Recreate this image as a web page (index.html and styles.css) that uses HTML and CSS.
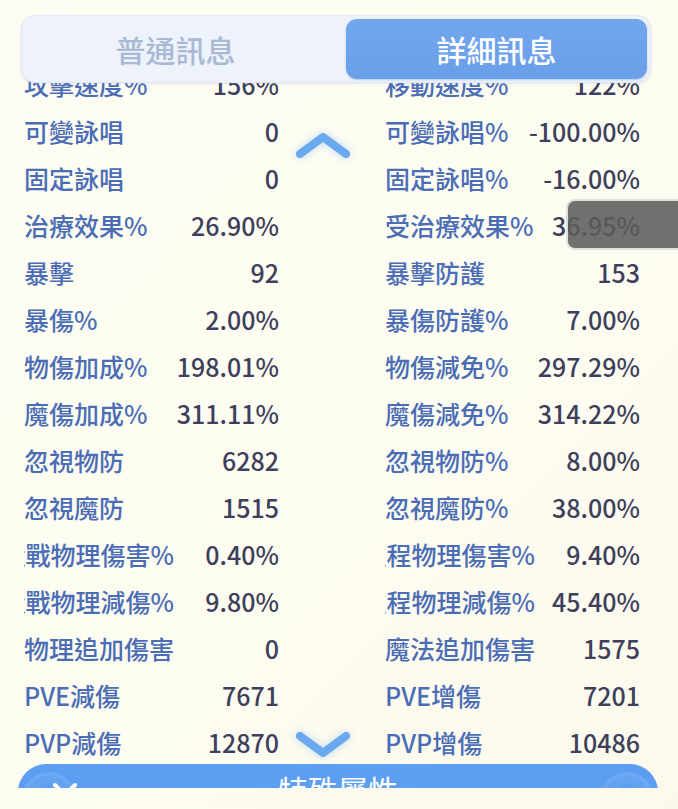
FILE: index.html
```html
<!DOCTYPE html>
<html lang="zh-Hant">
<head>
    <meta charset="UTF-8">
    <meta name="viewport" content="width=device-width, initial-scale=1.0">
    <title>詳細訊息</title>
    <link rel="stylesheet" href="styles.css">
</head>
<body>
    <div class="screen">
        <!-- Tab switcher sits on top of the scrolled list -->
        <div class="tabs">
            <div class="tab">普通訊息</div>
            <div class="tab active">詳細訊息</div>
        </div>

        <div class="stats">
            <div class="stat"><span class="label">攻擊速度%</span><span class="value">156%</span></div>
            <div class="stat"><span class="label">移動速度%</span><span class="value">122%</span></div>
            <div class="stat"><span class="label">可變詠唱</span><span class="value">0</span></div>
            <div class="stat"><span class="label">可變詠唱%</span><span class="value">-100.00%</span></div>
            <div class="stat"><span class="label">固定詠唱</span><span class="value">0</span></div>
            <div class="stat"><span class="label">固定詠唱%</span><span class="value">-16.00%</span></div>
            <div class="stat"><span class="label">治療效果%</span><span class="value">26.90%</span></div>
            <div class="stat"><span class="label">受治療效果%</span><span class="value">36.95%</span></div>
            <div class="stat"><span class="label">暴擊</span><span class="value">92</span></div>
            <div class="stat"><span class="label">暴擊防護</span><span class="value">153</span></div>
            <div class="stat"><span class="label">暴傷%</span><span class="value">2.00%</span></div>
            <div class="stat"><span class="label">暴傷防護%</span><span class="value">7.00%</span></div>
            <div class="stat"><span class="label">物傷加成%</span><span class="value">198.01%</span></div>
            <div class="stat"><span class="label">物傷減免%</span><span class="value">297.29%</span></div>
            <div class="stat"><span class="label">魔傷加成%</span><span class="value">311.11%</span></div>
            <div class="stat"><span class="label">魔傷減免%</span><span class="value">314.22%</span></div>
            <div class="stat"><span class="label">忽視物防</span><span class="value">6282</span></div>
            <div class="stat"><span class="label">忽視物防%</span><span class="value">8.00%</span></div>
            <div class="stat"><span class="label">忽視魔防</span><span class="value">1515</span></div>
            <div class="stat"><span class="label">忽視魔防%</span><span class="value">38.00%</span></div>
            <div class="stat"><span class="label clip"><span>近戰物理傷害%</span></span><span class="value">0.40%</span></div>
            <div class="stat"><span class="label clip"><span>遠程物理傷害%</span></span><span class="value">9.40%</span></div>
            <div class="stat"><span class="label clip"><span>近戰物理減傷%</span></span><span class="value">9.80%</span></div>
            <div class="stat"><span class="label clip"><span>遠程物理減傷%</span></span><span class="value">45.40%</span></div>
            <div class="stat"><span class="label">物理追加傷害</span><span class="value">0</span></div>
            <div class="stat"><span class="label">魔法追加傷害</span><span class="value">1575</span></div>
            <div class="stat"><span class="label">PVE減傷</span><span class="value">7671</span></div>
            <div class="stat"><span class="label">PVE增傷</span><span class="value">7201</span></div>
            <div class="stat"><span class="label">PVP減傷</span><span class="value">12870</span></div>
            <div class="stat"><span class="label">PVP增傷</span><span class="value">10486</span></div>
        </div>

        <!-- scroll hints -->
        <svg class="arrow arrow-up" width="54" height="30" viewBox="0 0 54 30">
            <polyline points="4,22 27,5 50,22" fill="none" stroke="#6aa9f0" stroke-width="8" stroke-linecap="round" stroke-linejoin="round"/>
        </svg>
        <svg class="arrow arrow-down" width="54" height="30" viewBox="0 0 54 30">
            <polyline points="4,7 27,24 50,7" fill="none" stroke="#6aa9f0" stroke-width="8" stroke-linecap="round" stroke-linejoin="round"/>
        </svg>

        <!-- floating handle on the right edge -->
        <div class="handle"></div>

        <div class="sheet">
            <div class="sheet-bar">
                <span class="ring ring-left"></span>
                <span class="ring ring-right"></span>
                <svg class="sheet-close" width="26" height="26" viewBox="0 0 26 26">
                    <path d="M3 3 L23 23 M23 3 L3 23" stroke="#ffffff" stroke-width="4" stroke-linecap="round"/>
                </svg>
                <span class="sheet-title">特殊屬性</span>
            </div>
        </div>
    </div>
</body>
</html>
```

FILE: styles.css
```css
body {
    margin: 0;
    padding: 0;
    font-family: "Noto Sans CJK TC", "Noto Sans", sans-serif;
    background: #fdfcf1;
}
.screen {
    position: relative;
    width: 678px;
    height: 809px;
    overflow: hidden;
    background: linear-gradient(135deg, #fdfdf3 0%, #fdfcf0 60%, #fcf9ec 100%);
}

/* tabs */
.tabs {
    position: relative;
    z-index: 2;
    display: flex;
    gap: 20px;
    margin: 15px 27px 0 21px;
    height: 68px;
    padding: 3px;
    box-sizing: border-box;
    background: #eef2fb;
    border: 1px solid #e1e7f3;
    border-radius: 14px;
    box-shadow: 0 1px 3px rgba(150, 170, 210, 0.25);
}
.tab {
    flex: 1;
    display: flex;
    align-items: center;
    justify-content: center;
    font-size: 30px;
    font-weight: 500;
    color: #a8b9d3;
    border-radius: 11px;
}
.tab.active {
    color: #ffffff;
    background: linear-gradient(180deg, #72a7ee 0%, #6a9fe9 100%);
    box-shadow: 0 1px 2px rgba(70, 120, 200, 0.35);
}

/* stat list */
.stats {
    display: grid;
    grid-template-columns: 255px 255px;
    column-gap: 106px;
    margin-top: -23px;
    padding-left: 24px;
}
.stat {
    display: flex;
    align-items: center;
    justify-content: space-between;
    height: 47px;
    font-size: 25px;
    font-weight: 500;
    white-space: nowrap;
}
.label {
    color: #4b6db6;
}
.label.clip {
    display: flex;
    justify-content: flex-end;
    width: 150px;
    overflow: hidden;
}
.value {
    color: #3d3f5c;
}

/* scroll arrows */
.arrow {
    position: absolute;
    left: 296px;
    filter: drop-shadow(0 0 4px rgba(120, 175, 240, 0.45));
}
.arrow-up {
    top: 132px;
}
.arrow-down {
    top: 729px;
}

.handle {
    position: absolute;
    left: 566px;
    top: 199px;
    width: 130px;
    height: 47px;
    border-radius: 9px;
    background: rgba(92, 92, 92, 0.88);
    border: 2px solid rgba(232, 232, 222, 0.95);
}

/* bottom sheet, only its top edge is showing */
.sheet {
    position: relative;
    margin: -1px 20px 0 18px;
    height: 24px;
    overflow: hidden;
}
.sheet-bar {
    position: relative;
    height: 70px;
    background: #5c9ff2;
    border-radius: 28px 28px 0 0;
    text-align: center;
    overflow: hidden;
}
.sheet-title {
    display: inline-block;
    padding-top: 8px;
    font-size: 30px;
    line-height: 34px;
    color: #ffffff;
}
.sheet-close {
    position: absolute;
    left: 34px;
    top: 18px;
}
.ring {
    position: absolute;
    top: 8px;
    width: 46px;
    height: 46px;
    border-radius: 50%;
    border: 4px solid rgba(255, 255, 255, 0.1);
    box-shadow: inset 0 0 0 8px rgba(255, 255, 255, 0.05);
}
.ring-left {
    left: 4px;
}
.ring-right {
    right: 4px;
}
```
